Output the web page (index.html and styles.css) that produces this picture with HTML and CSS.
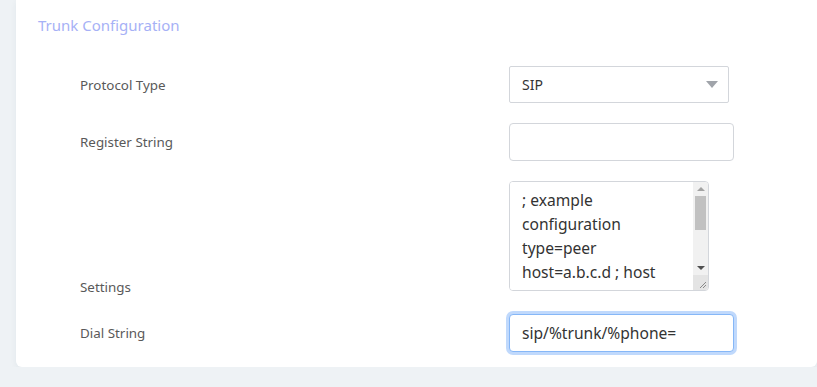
FILE: index.html
```html
<!DOCTYPE html>
<html lang="en">
<head>
  <meta charset="UTF-8" />
  <meta name="viewport" content="width=device-width, initial-scale=1.0" />
  <title>Trunk Configuration</title>
  <link rel="stylesheet" href="styles.css">
</head>
<body>
  <div class="card">
    <h3 class="card-title">Trunk Configuration</h3>

    <form class="trunk-form">
      <div class="form-row">
        <label class="form-label" for="protocol">Protocol Type</label>
        <div class="select-wrap">
          <select class="form-control select" id="protocol">
            <option>SIP</option>
            <option>IAX2</option>
          </select>
          <svg class="select-arrow" width="12" height="7" viewBox="0 0 12 7"><path d="M0 0h12L6 7z" fill="#a0a4aa"/></svg>
        </div>
      </div>

      <div class="form-row">
        <label class="form-label" for="register">Register String</label>
        <input class="form-control wide" id="register" type="text">
      </div>

      <div class="form-row">
        <label class="form-label form-label-bottom" for="settings">Settings</label>
        <div class="textarea-box">
          <textarea class="settings" id="settings">; example configuration
type=peer
host=a.b.c.d ; host address
username=user
secret=password
context=default</textarea>
          <!-- drawn scrollbar, the browser hides the native one -->
          <div class="scrollbar" aria-hidden="true">
            <span class="sb-btn"><svg width="8" height="4" viewBox="0 0 8 4"><path d="M0 4h8L4 0z" fill="#a3a3a3"/></svg></span>
            <span class="sb-track"><span class="sb-thumb"></span></span>
            <span class="sb-btn"><svg width="8" height="4" viewBox="0 0 8 4"><path d="M0 0h8L4 4z" fill="#505050"/></svg></span>
            <span class="sb-corner"><svg width="15" height="15" viewBox="0 0 15 15"><path d="M13 7L7 13M13 10L10 13" stroke="#8a8a8a" stroke-width="1"/></svg></span>
          </div>
        </div>
      </div>

      <div class="form-row">
        <label class="form-label" for="dial">Dial String</label>
        <input class="form-control wide focused" id="dial" type="text" value="sip/%trunk/%phone=">
      </div>
    </form>
  </div>
</body>
</html>
```

FILE: styles.css
```css
* {
  margin: 0;
  padding: 0;
  box-sizing: border-box;
}
body {
  background: #eef2f5;
  font-family: 'Noto Sans', 'Open Sans', sans-serif;
  color: #555;
  padding-left: 16px;
}
.card {
  background: #fff;
  height: 367px;
  border-radius: 0 0 6px 6px;
  box-shadow: 0 2px 6px rgba(40, 60, 80, 0.06);
  padding: 14px 0 0 22px;
}
.card-title {
  font-size: 15px;
  font-weight: normal;
  line-height: 22px;
  color: #a6b1f6;
}
.trunk-form {
  display: flex;
  flex-direction: column;
  gap: 20px;
  padding: 30px 0 0 42px;
}
.form-row {
  display: grid;
  grid-template-columns: 429px auto;
  align-items: center;
}
.form-label {
  font-size: 13.4px;
  line-height: 20px;
  color: #595959;
}
.form-label-bottom {
  align-self: end;
  margin-bottom: -3px;
}
.form-control {
  font-family: inherit;
  font-size: 15.6px;
  color: #333;
  background: #fff;
  border: 1px solid #d3d6db;
  border-radius: 4px;
  padding: 0 12px;
  outline: none;
}
.select-wrap {
  position: relative;
  width: 220px;
}
.select {
  appearance: none;
  -webkit-appearance: none;
  font-size: 14px;
  width: 220px;
  height: 37px;
  border-radius: 2px;
}
.select-arrow {
  position: absolute;
  right: 11px;
  top: 15px;
  pointer-events: none;
}
.wide {
  width: 225px;
  height: 38px;
}
.textarea-box {
  display: flex;
  width: 200px;
  height: 110px;
  margin-bottom: 3px;
  border: 1px solid #d3d6db;
  border-radius: 4px;
  overflow: hidden;
  background: #fff;
}
.settings {
  flex: 1;
  min-width: 0;
  border: none;
  outline: none;
  resize: none;
  overflow: hidden;
  font-family: inherit;
  font-size: 15.6px;
  line-height: 24px;
  color: #333;
  padding: 6px 12px;
}
.scrollbar {
  width: 15px;
  display: flex;
  flex-direction: column;
  background: #f1f1f1;
}
.sb-btn {
  height: 14px;
  display: flex;
  align-items: center;
  justify-content: center;
}
.sb-track {
  flex: 1;
  padding: 0 2px 0 2px;
}
.sb-thumb {
  display: block;
  height: 34px;
  background: #c1c1c1;
}
.sb-corner {
  height: 15px;
  background: #e4e4e4;
}
.sb-corner svg {
  display: block;
}
.focused {
  border-color: #86b7f7;
  box-shadow: 0 0 0 3px #c0d9fc;
}
```
